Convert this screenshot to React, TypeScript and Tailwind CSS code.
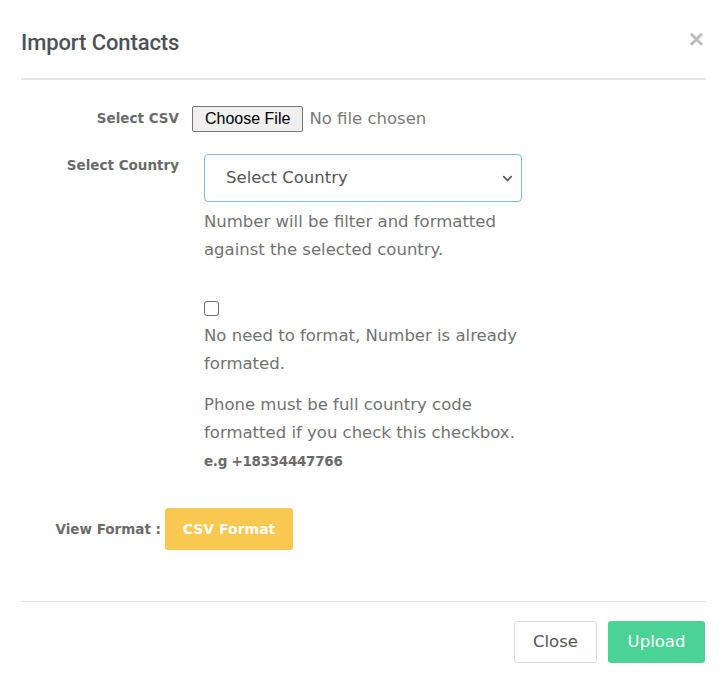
import { ChevronDown } from "lucide-react";

const body = "font-['DejaVu_Sans',sans-serif]";

export default function App() {
  return (
    <div className={`w-[722px] h-[684px] bg-white ${body}`}>
      {/* header */}
      <div className="ml-[21px] mr-[16px] h-[80px] flex items-center justify-between border-b-2 border-[#e6e6e6] pt-[6px]">
        <h4 className="font-['Roboto',sans-serif] font-medium text-[22px] tracking-[-0.1px] text-[#4c5258]">
          Import Contacts
        </h4>
        <button className="text-[26px] leading-none font-bold text-[#bdbdbd] font-['Liberation_Sans',sans-serif] mr-[2px] -mt-[6px]">
          ×
        </button>
      </div>

      {/* body */}
      <div className="pt-[26px]">
        <div className="flex items-center">
          <label className="w-[179px] text-right text-[13.5px] font-bold text-[#6b6b6b] -mt-[2px]">Select CSV</label>
          <div className="ml-[13px] flex items-center">
            <span className="h-[26px] px-[12px] flex items-center border border-[#767676] rounded-[2px] bg-[#efefef] text-[16px] text-black font-['Liberation_Sans',sans-serif]">
              Choose File
            </span>
            <span className="ml-[6px] text-[16.5px] text-[#7a7a7a]">No file chosen</span>
          </div>
        </div>

        <div className="flex mt-[22px]">
          <label className="w-[179px] text-right text-[13.5px] font-bold text-[#6b6b6b] pt-[1px]">Select Country</label>
          <div className="ml-[25px] w-[318px]">
            <div className="relative h-[48px] border border-[#7fb8ee] rounded-[4px] flex items-center pl-[21px] text-[16.5px] text-[#555]">
              Select Country
              <ChevronDown className="absolute right-[6px] top-[16px] w-[15px] h-[15px] text-[#555]" strokeWidth={2.5} />
            </div>
            <p className="mt-[6px] text-[16.5px] leading-[28px] text-[#727272] whitespace-nowrap">
              Number will be filter and formatted
              <br />
              against the selected country.
            </p>

            <input type="checkbox" className="mt-[37px] block w-[15px] h-[15px] appearance-none border border-[#6b6b6b] rounded-[3px] bg-white" />
            <p className="mt-[6px] text-[16.5px] leading-[28px] text-[#727272] whitespace-nowrap">
              No need to format, Number is already
              <br />
              formated.
            </p>
            <p className="mt-[13px] text-[16.5px] leading-[28px] text-[#727272] whitespace-nowrap">
              Phone must be full country code
              <br />
              formatted if you check this checkbox.
              <br />
              <span className="font-bold text-[#6b6b6b] text-[13.5px] tracking-[-0.3px]">e.g +18334447766</span>
            </p>
          </div>
        </div>

        <div className="flex items-center mt-[33px]">
          <label className="w-[161px] text-right text-[13.5px] font-bold text-[#6b6b6b]">View Format :</label>
          <button className="ml-[4px] w-[128px] h-[42px] rounded-[3px] bg-[#f9c851] text-white font-bold text-[14px]">
            CSV Format
          </button>
        </div>
      </div>

      {/* footer */}
      <div className="ml-[21px] mr-[16px] mt-[51px] border-t border-[#e6e6e6] pt-[19px] flex justify-end gap-[11px]">
        <button className="w-[83px] h-[42px] border border-[#dcdcdc] rounded-[3px] bg-white text-[16.5px] text-[#555]">
          Close
        </button>
        <button className="w-[97px] h-[42px] rounded-[3px] bg-[#4bd396] text-white text-[16.5px] mr-[1px]">
          Upload
        </button>
      </div>
    </div>
  );
}
